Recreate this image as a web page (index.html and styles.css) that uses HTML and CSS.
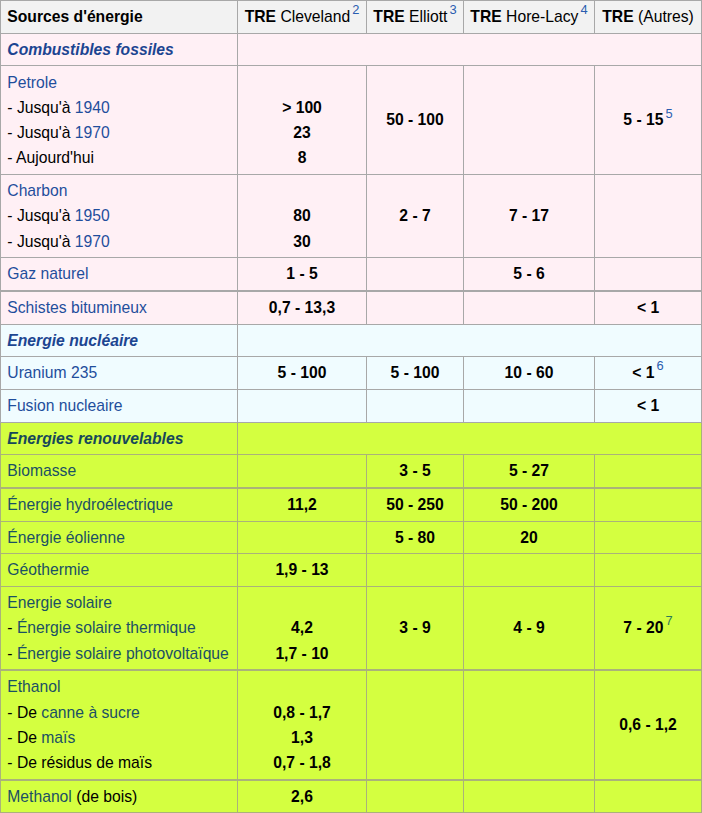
FILE: index.html
```html
<!DOCTYPE html>
<html lang="fr">
<head>
<meta charset="utf-8">
<title>TRE</title>
<link rel="stylesheet" href="styles.css">
</head>
<body>
<table class="wikitable">
  <colgroup>
    <col class="c1"><col class="c2"><col class="c3"><col class="c4"><col class="c5">
  </colgroup>
  <thead>
    <tr>
      <th class="first">Sources d'énergie</th>
      <th><b>TRE</b> <span class="n">Cleveland</span><sup class="ref">2</sup></th>
      <th><b>TRE</b> <span class="n">Elliott</span><sup class="ref">3</sup></th>
      <th><b>TRE</b> <span class="n">Hore-Lacy</span><sup class="ref">4</sup></th>
      <th><b>TRE</b> <span class="n">(Autres)</span></th>
    </tr>
  </thead>
  <tbody class="fossil">
    <tr>
      <td class="cat"><a>Combustibles fossiles</a></td>
      <td colspan="4"></td>
    </tr>
    <tr>
      <td class="src"><a>Petrole</a><br>- Jusqu'à <a>1940</a><br>- Jusqu'à <a>1970</a><br>- Aujourd'hui</td>
      <td class="v"><br>&gt; 100<br>23<br>8</td>
      <td class="v">50 - 100</td>
      <td class="v"></td>
      <td class="v">5 - 15<sup class="ref">5</sup></td>
    </tr>
    <tr>
      <td class="src"><a>Charbon</a><br>- Jusqu'à <a>1950</a><br>- Jusqu'à <a>1970</a></td>
      <td class="v"><br>80<br>30</td>
      <td class="v">2 - 7</td>
      <td class="v">7 - 17</td>
      <td class="v"></td>
    </tr>
    <tr>
      <td class="src"><a>Gaz naturel</a></td>
      <td class="v">1 - 5</td>
      <td class="v"></td>
      <td class="v">5 - 6</td>
      <td class="v"></td>
    </tr>
    <tr class="thick">
      <td class="src"><a>Schistes bitumineux</a></td>
      <td class="v">0,7 - 13,3</td>
      <td class="v"></td>
      <td class="v"></td>
      <td class="v">&lt; 1</td>
    </tr>
  </tbody>
  <tbody class="nuclear">
    <tr>
      <td class="cat"><a>Energie nucléaire</a></td>
      <td colspan="4"></td>
    </tr>
    <tr>
      <td class="src"><a>Uranium 235</a></td>
      <td class="v">5 - 100</td>
      <td class="v">5 - 100</td>
      <td class="v">10 - 60</td>
      <td class="v">&lt; 1<sup class="ref">6</sup></td>
    </tr>
    <tr>
      <td class="src"><a>Fusion nucleaire</a></td>
      <td class="v"></td>
      <td class="v"></td>
      <td class="v"></td>
      <td class="v">&lt; 1</td>
    </tr>
  </tbody>
  <tbody class="renew">
    <tr>
      <td class="cat"><a>Energies renouvelables</a></td>
      <td colspan="4"></td>
    </tr>
    <tr>
      <td class="src"><a>Biomasse</a></td>
      <td class="v"></td>
      <td class="v">3 - 5</td>
      <td class="v">5 - 27</td>
      <td class="v"></td>
    </tr>
    <tr class="thick">
      <td class="src"><a>Énergie hydroélectrique</a></td>
      <td class="v">11,2</td>
      <td class="v">50 - 250</td>
      <td class="v">50 - 200</td>
      <td class="v"></td>
    </tr>
    <tr>
      <td class="src"><a>Énergie éolienne</a></td>
      <td class="v"></td>
      <td class="v">5 - 80</td>
      <td class="v">20</td>
      <td class="v"></td>
    </tr>
    <tr>
      <td class="src"><a>Géothermie</a></td>
      <td class="v">1,9 - 13</td>
      <td class="v"></td>
      <td class="v"></td>
      <td class="v"></td>
    </tr>
    <tr>
      <td class="src"><a>Energie solaire</a><br>- <a>Énergie solaire thermique</a><br>- <a>Énergie solaire photovoltaïque</a></td>
      <td class="v"><br>4,2<br>1,7 - 10</td>
      <td class="v">3 - 9</td>
      <td class="v">4 - 9</td>
      <td class="v">7 - 20<sup class="ref">7</sup></td>
    </tr>
    <tr class="thick">
      <td class="src"><a>Ethanol</a><br>- De <a>canne à sucre</a><br>- De <a>maïs</a><br>- De résidus de maïs</td>
      <td class="v"><br>0,8 - 1,7<br>1,3<br>0,7 - 1,8</td>
      <td class="v"></td>
      <td class="v"></td>
      <td class="v">0,6 - 1,2</td>
    </tr>
    <tr class="thick">
      <td class="src"><a>Methanol</a> (de bois)</td>
      <td class="v">2,6</td>
      <td class="v"></td>
      <td class="v"></td>
      <td class="v"></td>
    </tr>
  </tbody>
</table>
</body>
</html>
```

FILE: styles.css
```css
html, body {
  margin: 0;
  padding: 0;
  background: #ffffff;
}

body {
  font-family: "Liberation Sans", Arial, sans-serif;
  font-size: 15.7px;
  line-height: 25.3px;
  color: #000;
}

.wikitable {
  border-collapse: collapse;
  table-layout: fixed;
  width: 701px;
  border: 1px solid #a8a8a8;
}

.c1 { width: 237px; }
.c2 { width: 129px; }
.c3 { width: 97px; }
.c4 { width: 131px; }
.c5 { width: 107px; }

.wikitable th,
.wikitable td {
  border: 1px solid #a8a8a8;
  padding: 3.2px 6.3px;
  vertical-align: middle;
}

.wikitable th {
  background: #f2f2f2;
  font-weight: normal;
  text-align: center;
  white-space: nowrap;
}

.wikitable th.first {
  text-align: left;
  font-weight: bold;
}

.wikitable th b {
  font-weight: bold;
}

a {
  color: #1f4e9c;
  text-decoration: none;
}

.ref {
  color: #2a5db0;
  font-size: 82%;
  line-height: 1;
  vertical-align: 0.62em;
  font-weight: normal;
  margin-left: 2px;
}

.cat {
  font-weight: bold;
  font-style: italic;
}

.cat a {
  color: #1c4591;
}

.src {
  text-align: left;
  white-space: nowrap;
}

.v {
  text-align: center;
  font-weight: bold;
}

.fossil td { background: #fff0f5; }
.nuclear td { background: #f0fcff; }
.renew td { background: #d4ff40; }

.renew a { color: #1b5064; }
.renew .cat a { color: #17485a; }
.renew .ref { color: #2c7a5a; }

.wikitable tr.thick td {
  border-top: 2px solid #a8a8a8;
}

.renew td { border-color: #aab27a; }
.wikitable .renew tr.thick td { border-top-color: #aab27a; }
```
